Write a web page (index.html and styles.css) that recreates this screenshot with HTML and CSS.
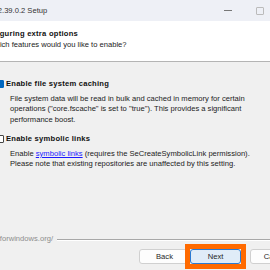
FILE: index.html
```html
<!doctype html>
<html lang="en">

<head>
    <meta charset="utf-8">
    <title>Git Setup</title>
    <link rel="stylesheet" href="styles.css">
</head>

<body>
    <div class="window">
        <div class="titlebar">
            <span class="title">Git 2.39.0.2 Setup</span>
            <div class="controls">
                <div class="ctl"><span class="ctl-min"></span></div>
                <div class="ctl"><span class="ctl-max"></span></div>
                <div class="ctl"><span class="ctl-close">✕</span></div>
            </div>
        </div>
        <div class="header">
            <div class="h-title">Configuring extra options</div>
            <div class="h-sub">Which features would you like to enable?</div>
        </div>
        <div class="content">
            <div class="option">
                <div class="opt-head"><span class="check checked"></span>Enable file system caching</div>
                <p class="desc">File system data will be read in bulk and cached in memory for certain<br>operations ("core.fscache" is set to "true"). This provides a significant<br>performance boost.</p>
            </div>
            <div class="option">
                <div class="opt-head"><span class="check"></span>Enable symbolic links</div>
                <p class="desc">Enable <a href="#">symbolic links</a> (requires the SeCreateSymbolicLink permission).<br>Please note that existing repositories are unaffected by this setting.</p>
            </div>
        </div>
        <div class="bevel">
            <span class="url">https://gitforwindows.org/</span>
            <span class="bevel-line"></span>
        </div>
        <div class="buttons">
            <div class="btn">Back</div>
            <div class="btn btn-next">Next<span class="highlight"></span></div>
            <div class="btn btn-cancel">Cancel</div>
        </div>
    </div>
</body>

</html>
```

FILE: styles.css
```css
html,
body {
    margin: 0;
    padding: 0;
    width: 270px;
    height: 270px;
    overflow: hidden;
    background: #f0f0f0;
}

.window {
    margin-left: -30px;
    width: 338px;
    font-family: 'Liberation Sans', Arial, sans-serif;
    font-size: 7.6px;
    line-height: 10.5px;
    color: #1e1e1e;
}

.titlebar {
    height: 21px;
    display: flex;
    align-items: center;
    background: #eef0f6;
}

.titlebar .title {
    padding-left: 16px;
    padding-top: 1px;
    color: #333;
}

.controls {
    margin-left: auto;
    display: flex;
    height: 100%;
}

.ctl {
    width: 32px;
    display: flex;
    align-items: center;
    justify-content: center;
}

.ctl-min {
    width: 8px;
    height: 1px;
    background: #777;
}

.ctl-max {
    width: 6px;
    height: 6px;
    border: 1px solid #bbb;
    border-radius: 1px;
}

.ctl-close {
    font-size: 8px;
    color: #555;
}

.header {
    background: #fff;
    height: 41px;
    padding: 8px 0 0 9px;
    box-sizing: border-box;
    border-bottom: 1px solid #b4b4b4;
}

.h-title {
    font-weight: bold;
    letter-spacing: 0.25px;
    color: #111;
}

.h-sub {
    padding-left: 9.5px;
    color: #222;
}

.content {
    height: 172px;
    box-sizing: border-box;
    padding: 17px 0 0 26px;
}

.option {
    margin-bottom: 9px;
}

.opt-head {
    display: flex;
    align-items: center;
    font-weight: bold;
    letter-spacing: 0.23px;
    color: #111;
}

.check {
    width: 6px;
    height: 6px;
    border: 1px solid #444;
    border-radius: 1px;
    background: #fff;
    margin-right: 2px;
}

.check.checked {
    background: #0067c0;
    border-color: #0067c0;
}

.desc {
    margin: 4px 0 0 14px;
    white-space: nowrap;
    color: #222;
}

.desc a {
    color: #1a1aff;
}

.bevel {
    display: flex;
    align-items: center;
    height: 11px;
    margin-left: -1px;
}

.url {
    color: #8e8e8e;
    padding-right: 4px;
    white-space: nowrap;
}

.bevel-line {
    flex: 1;
    height: 1px;
    background: #a8a8a8;
    border-bottom: 1px solid #fff;
}

.buttons {
    display: flex;
    padding: 4px 0 0 169px;
}

.btn {
    width: 51px;
    height: 15px;
    box-sizing: border-box;
    border: 1px solid #d0d0d0;
    border-radius: 3px;
    background: #fdfdfd;
    text-align: center;
    line-height: 13px;
    color: #1e1e1e;
}

.btn-next {
    position: relative;
    background: #e0ecf8;
    border-color: #2a7ad2;
}

.btn-cancel {
    margin-left: 9px;
}

.highlight {
    position: absolute;
    left: -6px;
    right: -6px;
    top: -6px;
    bottom: -6px;
    border: 5px solid #ff6a00;
}
```
